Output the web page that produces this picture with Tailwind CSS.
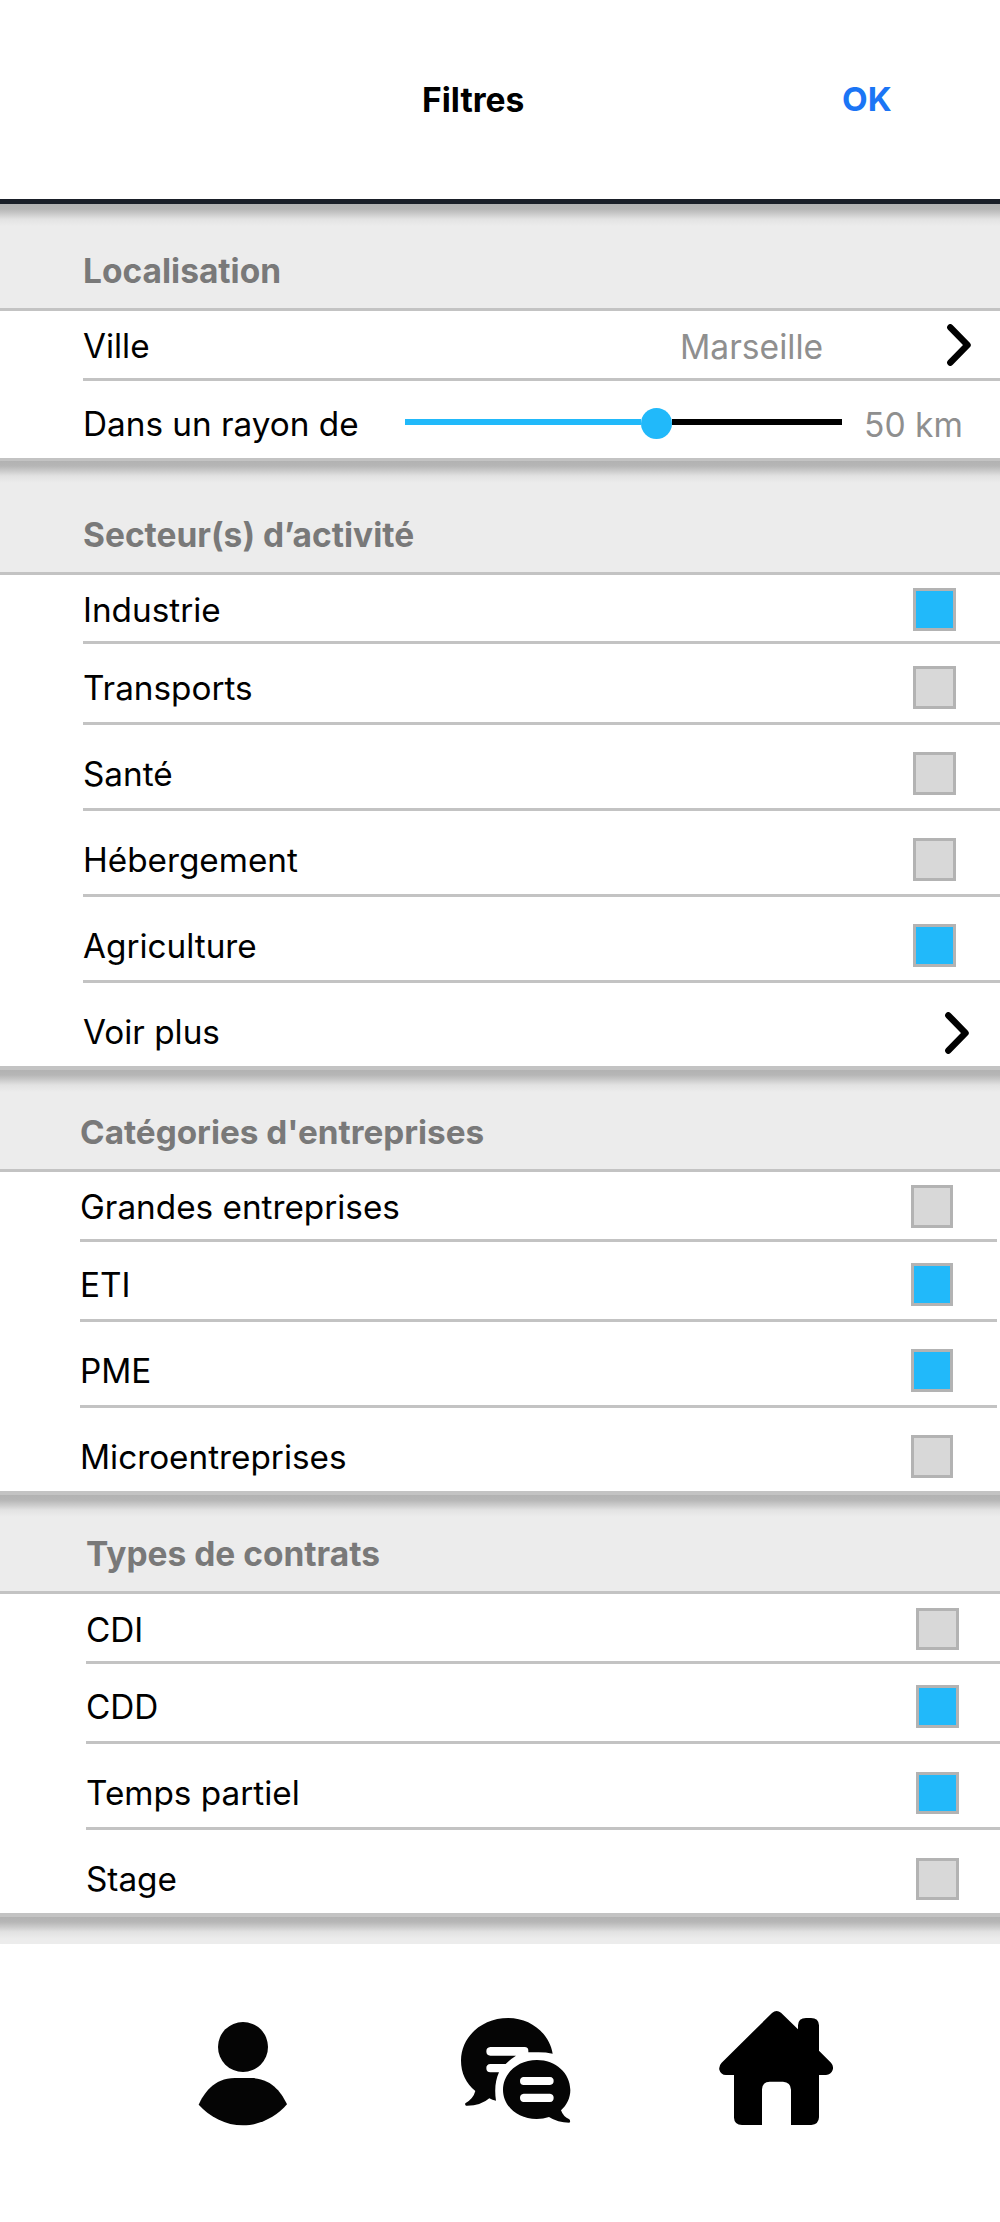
<!DOCTYPE html>
<html lang="fr">
<head>
<meta charset="utf-8">
<title>Filtres</title>
<script src="https://cdn.jsdelivr.net/npm/@tailwindcss/browser@4"></script>
</head>
<body class="w-[1000px] h-[2222px] overflow-hidden bg-white font-['Inter',sans-serif] text-[33.3px] leading-[45px] text-black whitespace-nowrap">

<header class="flex h-[204px] items-center border-b-[5px] border-[#1a1f28] pl-[422px] font-bold">
  <h1 class="w-[420px] text-[33.6px]">Filtres</h1>
  <button class="font-bold text-[#1b75f5]">OK</button>
</header>

<main>
  <section>
    <h2 class="h-[107px] border-b-3 border-[#c3c3c3] bg-[#ececec] bg-[linear-gradient(#b2b2b2_0px,#b6b6b6_5px,#cbcbcb_10px,#e2e2e2_15px,#ececec_22px)] pl-[83px] pt-[45px] text-[33.5px] font-bold text-[#797979]">Localisation</h2>
    <div class="border-b-3 border-[#c3c3c3] pl-[83px]">
      <div class="flex h-[70px] items-start border-b-3 border-[#c3c3c3] pt-[13px]">
        <span class="w-[597px]">Ville</span>
        <span class="w-[267px] text-[33.6px] text-[#8f8f8f]">Marseille</span>
        <svg class="h-[42px] w-6" viewBox="0 0 24 42" fill="none" stroke="#000" stroke-width="6.5" stroke-linecap="round" stroke-linejoin="round"><path d="M3.4 3.4 20.5 21 3.4 38.6"/></svg>
      </div>
      <div class="flex h-[77px] items-start pt-[21px]">
        <span class="w-[322px]">Dans un rayon de</span>
        <div class="flex h-[43px] w-[437px] items-center">
          <div class="mb-[3px] h-1.5 w-[236px] bg-[#21b9fa]"></div>
          <div class="size-[31px] rounded-full bg-[#21b9fa]"></div>
          <div class="mb-[3px] h-1.5 w-[170px] bg-black"></div>
        </div>
        <span class="pl-[22px] text-[33.6px] text-[#8f8f8f]">50 km</span>
      </div>
    </div>
  </section>

  <section>
    <h2 class="h-[114px] border-b-3 border-[#c3c3c3] bg-[#ececec] bg-[linear-gradient(#b2b2b2_0px,#b6b6b6_5px,#cbcbcb_10px,#e2e2e2_15px,#ececec_22px)] pl-[83px] pt-[52px] text-[33.5px] font-bold text-[#797979]">Secteur(s) d’activité</h2>
    <div class="border-b-4 border-[#c3c3c3] pl-[83px]">
      <div class="flex h-[69px] items-start justify-between border-b-3 border-[#c3c3c3] pr-11 pt-[13px]">
        <span>Industrie</span><span class="size-[43px] border-3 border-[#b3b3b3] bg-[#21b9fa]"></span>
      </div>
      <div class="flex h-[81px] items-start justify-between border-b-3 border-[#c3c3c3] pr-11 pt-[22px]">
        <span>Transports</span><span class="size-[43px] border-3 border-[#b3b3b3] bg-[#d8d8d8]"></span>
      </div>
      <div class="flex h-[86px] items-start justify-between border-b-3 border-[#c3c3c3] pr-11 pt-[27px]">
        <span>Santé</span><span class="size-[43px] border-3 border-[#b3b3b3] bg-[#d8d8d8]"></span>
      </div>
      <div class="flex h-[86px] items-start justify-between border-b-3 border-[#c3c3c3] pr-11 pt-[27px]">
        <span>Hébergement</span><span class="size-[43px] border-3 border-[#b3b3b3] bg-[#d8d8d8]"></span>
      </div>
      <div class="flex h-[86px] items-start justify-between border-b-3 border-[#c3c3c3] pr-11 pt-[27px]">
        <span>Agriculture</span><span class="size-[43px] border-3 border-[#b3b3b3] bg-[#21b9fa]"></span>
      </div>
      <div class="flex h-[83px] items-start justify-between pr-[31px] pt-[27px]">
        <span>Voir plus</span>
        <svg class="mt-0.5 h-[42px] w-6" viewBox="0 0 24 42" fill="none" stroke="#000" stroke-width="6.5" stroke-linecap="round" stroke-linejoin="round"><path d="M3.4 3.4 20.5 21 3.4 38.6"/></svg>
      </div>
    </div>
  </section>

  <section>
    <h2 class="h-[102px] border-b-3 border-[#c3c3c3] bg-[#ececec] bg-[linear-gradient(#b2b2b2_0px,#b6b6b6_5px,#cbcbcb_10px,#e2e2e2_15px,#ececec_22px)] pl-20 pt-10 font-bold text-[#797979]">Catégories d'entreprises</h2>
    <div class="border-b-4 border-[#c3c3c3] pl-20 pr-[3px]">
      <div class="flex h-[70px] items-start justify-between border-b-3 border-[#c3c3c3] pr-11 pt-[13px]">
        <span>Grandes entreprises</span><span class="h-[43px] w-[42px] border-3 border-[#b3b3b3] bg-[#d8d8d8]"></span>
      </div>
      <div class="flex h-20 items-start justify-between border-b-3 border-[#c3c3c3] pr-11 pt-[21px]">
        <span>ETI</span><span class="h-[43px] w-[42px] border-3 border-[#b3b3b3] bg-[#21b9fa]"></span>
      </div>
      <div class="flex h-[86px] items-start justify-between border-b-3 border-[#c3c3c3] pr-11 pt-[27px]">
        <span>PME</span><span class="h-[43px] w-[42px] border-3 border-[#b3b3b3] bg-[#21b9fa]"></span>
      </div>
      <div class="flex h-[83px] items-start justify-between pr-11 pt-[27px]">
        <span>Microentreprises</span><span class="h-[43px] w-[42px] border-3 border-[#b3b3b3] bg-[#d8d8d8]"></span>
      </div>
    </div>
  </section>

  <section>
    <h2 class="h-[99px] border-b-3 border-[#c3c3c3] bg-[#ececec] bg-[linear-gradient(#b2b2b2_0px,#b6b6b6_5px,#cbcbcb_10px,#e2e2e2_15px,#ececec_22px)] pl-[86px] pt-[37px] text-[33.5px] font-bold text-[#797979]">Types de contrats</h2>
    <div class="border-b-4 border-[#c3c3c3] pl-[86px]">
      <div class="flex h-[70px] items-start justify-between border-b-3 border-[#c3c3c3] pr-[41px] pt-[14px]">
        <span>CDI</span><span class="h-[42px] w-[43px] border-3 border-[#b3b3b3] bg-[#d8d8d8]"></span>
      </div>
      <div class="flex h-20 items-start justify-between border-b-3 border-[#c3c3c3] pr-[41px] pt-[21px]">
        <span>CDD</span><span class="h-[43px] w-[43px] border-3 border-[#b3b3b3] bg-[#21b9fa]"></span>
      </div>
      <div class="flex h-[86px] items-start justify-between border-b-3 border-[#c3c3c3] pr-[41px] pt-[28px]">
        <span class="-mt-px">Temps partiel</span><span class="h-[42px] w-[43px] border-3 border-[#b3b3b3] bg-[#21b9fa]"></span>
      </div>
      <div class="flex h-[83px] items-start justify-between pr-[41px] pt-[28px]">
        <span class="-mt-px">Stage</span><span class="h-[42px] w-[43px] border-3 border-[#b3b3b3] bg-[#d8d8d8]"></span>
      </div>
    </div>
  </section>
  <div class="h-[27px] bg-[#ececec] bg-[linear-gradient(#b2b2b2_0px,#b6b6b6_5px,#cbcbcb_10px,#e2e2e2_15px,#ececec_22px)]"></div>
</main>

<nav class="flex h-[278px] items-start bg-white pl-[180px] pt-[46px]">
  <svg class="h-[150px] w-[130px]" viewBox="0 0 390 450" fill="#050505">
    <circle cx="189" cy="171" r="75"/>
    <path d="M56 344C70 313 100 264 165 264H212C278 264 307 313 321 343C290 380 240 406 189 406C137 406 88 380 56 344Z"/>
  </svg>
  <svg class="ml-[130px] size-[150px]" viewBox="0 0 450 450" fill="#050505">
    <path fill-rule="evenodd" d="M205 84C272 84 328 130 338 191Q318 187 296 187H265V182Q265 171 254 171H151Q139 172 139 184Q139 197 151 197H228Q212 207 197 222H151Q139 223 139 234Q139 247 151 247H177C166 270 163 300 168 332Q157 331 148 325Q122 348 78 347Q74 345 76 340Q100 326 106 303C78 280 63 250 63 211C64 140 125 84 205 84Z"/>
    <path fill-rule="evenodd" d="M291 210C347 210 391 249 391 300C391 324 380 346 363 361Q370 381 388 388Q393 394 388 398Q353 398 327 381C315 385 304 387 290 387C233 387 189 348 189 299C189 250 233 210 291 210ZM251 261Q240 262 240 273Q240 285 251 285H330Q341 284 341 273Q341 262 330 261ZM251 311Q240 312 240 323Q240 335 251 336H330Q341 335 341 323Q341 312 330 311Z"/>
  </svg>
  <svg class="ml-[110px] size-[150px]" viewBox="0 0 450 450" fill="#000">
    <path d="M216 69Q229 58 243 68L294 118V106Q295 84 318 84H333Q356 84 357 106V182L393 218Q402 228 398 240Q393 254 378 255H357V382Q356 404 334 405H273V299Q272 276 249 275H209Q187 276 186 298V405H126Q103 404 102 383V255H78Q62 254 58 239Q56 227 65 218Z"/>
  </svg>
</nav>
</body>
</html>
